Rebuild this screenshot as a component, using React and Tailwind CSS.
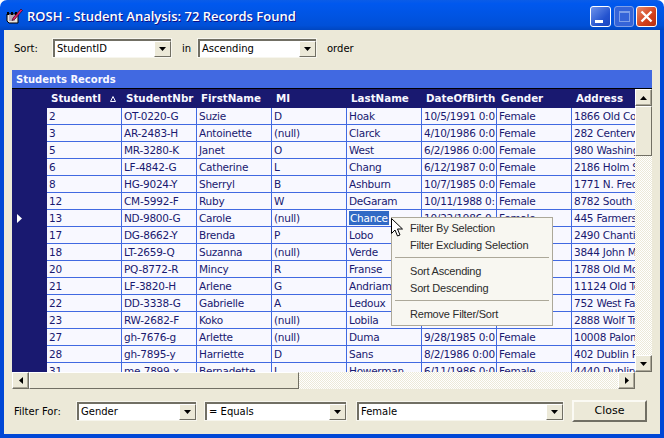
import React from 'react'

const rows = [
  ['2', 'OT-0220-G', 'Suzie', 'D', 'Hoak', '10/5/1991 0:0', 'Female', '1866 Old Country Rd'],
  ['3', 'AR-2483-H', 'Antoinette', '(null)', 'Clarck', '4/10/1986 0:0', 'Female', '282 Centerway Blvd'],
  ['5', 'MR-3280-K', 'Janet', 'O', 'West', '6/2/1986 0:00', 'Female', '980 Washington St'],
  ['6', 'LF-4842-G', 'Catherine', 'L', 'Chang', '6/12/1987 0:0', 'Female', '2186 Holm Street'],
  ['8', 'HG-9024-Y', 'Sherryl', 'B', 'Ashburn', '10/7/1985 0:0', 'Female', '1771 N. Frederick'],
  ['12', 'CM-5992-F', 'Ruby', 'W', 'DeGaram', '10/11/1988 0:', 'Female', '8782 South Valley'],
  ['13', 'ND-9800-G', 'Carole', '(null)', 'Chance', '10/22/1986 0:', 'Female', '445 Farmers Lane'],
  ['17', 'DG-8662-Y', 'Brenda', 'P', 'Lobo', '3/14/1986 0:0', 'Female', '2490 Chantilly Dr'],
  ['18', 'LT-2659-Q', 'Suzanna', '(null)', 'Verde', '7/19/1987 0:0', 'Female', '3844 John Muir Rd'],
  ['20', 'PQ-8772-R', 'Mincy', 'R', 'Franse', '1/25/1986 0:0', 'Female', '1788 Old Mountain'],
  ['21', 'LF-3820-H', 'Arlene', 'G', 'Andriaman', '5/30/1985 0:0', 'Female', '11124 Old Town Rd'],
  ['22', 'DD-3338-G', 'Gabrielle', 'A', 'Ledoux', '2/8/1987 0:00', 'Female', '752 West Falls Ave'],
  ['23', 'RW-2682-F', 'Koko', '(null)', 'Lobila', '(null)', 'Female', '2888 Wolf Trail'],
  ['27', 'gh-7676-g', 'Arlette', '(null)', 'Duma', '9/28/1985 0:0', 'Female', '10008 Palomino Ct'],
  ['28', 'gh-7895-y', 'Harriette', 'D', 'Sans', '8/2/1986 0:00', 'Female', '402 Dublin Pike'],
  ['31', 'me-7899-x', 'Bernadette', 'L', 'Howerman', '6/11/1986 0:0', 'Female', '4440 Dublin Rd'],
]

const columns = ['StudentI', 'StudentNbr', 'FirstName', 'MI', 'LastName', 'DateOfBirth', 'Gender', 'Address']

function Arrow({ dir }) {
  const points = {
    up: '3.5,0 7,4 0,4',
    down: '0,0 7,0 3.5,4',
    left: '4,0 4,7 0,3.5',
    right: '0,0 4,3.5 0,7',
  }
  const vertical = dir === 'up' || dir === 'down'
  return (
    <svg width={vertical ? 7 : 4} height={vertical ? 4 : 7} className="block">
      <polygon points={points[dir]} fill="#000" />
    </svg>
  )
}

function ScrollButton({ dir }) {
  return (
    <div className="flex h-[17px] w-[17px] shrink-0 items-center justify-center border border-t-white border-l-white border-r-[#716f64] border-b-[#716f64] bg-[#ece9d8] shadow-[inset_-1px_-1px_0_#aca899]">
      <Arrow dir={dir} />
    </div>
  )
}

function Combo({ className, value }) {
  return (
    <div className={'h-[20px] border border-[#f7f6ee] ' + className}>
      <div className="flex h-full items-stretch border-t-2 border-l-2 border-[#716f64] bg-white">
        <span className="flex-1 truncate pl-[2px] leading-[16px]">{value}</span>
        <div className="flex w-[17px] shrink-0 items-center justify-center border border-t-white border-l-white border-r-[#716f64] border-b-[#716f64] bg-[#ece9d8]">
          <Arrow dir="down" />
        </div>
      </div>
    </div>
  )
}

function TitleIcon() {
  return (
    <svg width="17" height="17" viewBox="0 0 17 17" className="shrink-0">
      <path d="M1 6h11v9H3l-2-2z" fill="#e8e4e0" stroke="#000" />
      <path d="M3 8h7M3 10h7M3 12h6" stroke="#8a6a8a" />
      <path d="M1 4h2v3H1zM5 4h2v3H5zM9 4h2v3H9z" fill="#000" />
      <path d="M7 10l8-9 1.5 1.5-8 9-2.5 1z" fill="#e0206a" stroke="#200010" strokeWidth="0.6" />
    </svg>
  )
}

function WindowButtons() {
  return (
    <div className="flex items-start pt-[6px] pr-[7px]">
      <div className="relative h-[21px] w-[21px] rounded-[3px] border border-white bg-[linear-gradient(135deg,#6f93ea,#2353cf_65%,#1c46c0)]">
        <div className="absolute bottom-[3px] left-[4px] h-[3px] w-[8px] bg-white"></div>
      </div>
      <div className="ml-[3px] flex h-[21px] w-[20px] items-start justify-center rounded-[3px] border border-[#7e9fe8] bg-[#3564d8] pt-[4px]">
        <div className="h-[11px] w-[11px] border border-t-[2px] border-[#7e9fe8]"></div>
      </div>
      <div className="ml-[2px] flex h-[21px] w-[21px] items-center justify-center rounded-[3px] border border-white bg-[linear-gradient(135deg,#e88a6a,#d2401c_60%,#b83010)]">
        <svg width="13" height="13" viewBox="0 0 13 13">
          <path d="M1.5 1.5l10 10M11.5 1.5l-10 10" stroke="#fff" strokeWidth="2.4" />
        </svg>
      </div>
    </div>
  )
}

function Grid() {
  return (
    <div className="h-[283px] w-[623px] overflow-hidden">
      <div className="flex h-[19px] w-[647px] bg-[#191970] pl-[35px] font-bold text-[#f8f8ff]">
        {columns.map((c, i) => (
          <div key={c} className="relative w-[75px] shrink-0 pl-[4px] text-[10.3px] leading-[18px]">
            {c}
            {i === 0 && (
              <svg width="6" height="6" className="absolute top-[7px] left-[63px]">
                <path d="M3 .5L5.5 5.5H.5z" fill="none" stroke="#f8f8ff" />
              </svg>
            )}
          </div>
        ))}
      </div>
      {rows.map((row, r) => (
        <div key={row[0]} className="flex h-[17px] w-[647px]">
          <div className="flex w-[35px] shrink-0 items-center bg-[#191970] pl-[5px]">
            {r === 6 && (
              <svg width="5" height="9">
                <path d="M0 0l5 4.5L0 9z" fill="#fff" />
              </svg>
            )}
          </div>
          {row.map((cell, i) => (
            <div key={i} className="w-[75px] shrink-0 overflow-hidden border-r border-b border-[#4169e1] bg-[#f8f8ff] pl-[2px] text-[10.5px] leading-[17px] tracking-[-0.25px] whitespace-nowrap text-[#191970]">
              {r === 6 && i === 4 ? <span className="bg-[#316ac5] px-[1px] py-[1px] text-white">{cell}</span> : cell}
            </div>
          ))}
        </div>
      ))}
    </div>
  )
}

function ContextMenu() {
  const item = 'h-[17px] pl-[18px] leading-[17px]'
  return (
    <div className="absolute top-[217px] left-[391px] h-[109px] w-[162px] border border-[#aca899] bg-[#f8f7f1] pt-[2px] font-['Liberation_Sans',sans-serif] text-[11px] tracking-[-0.2px] text-[#2b2b2b]">
      <div className={item}>Filter By Selection</div>
      <div className={item}>Filter Excluding Selection</div>
      <div className="mx-[3px] mt-[3px] mb-[5px] h-[1px] bg-[#aca899]"></div>
      <div className={item}>Sort Ascending</div>
      <div className={item}>Sort Descending</div>
      <div className="mx-[3px] mt-[3px] mb-[5px] h-[1px] bg-[#aca899]"></div>
      <div className={item}>Remove Filter/Sort</div>
    </div>
  )
}

export default function App() {
  return (
    <div className="relative flex h-[438px] w-[664px] flex-col overflow-hidden bg-white font-['DejaVu_Sans',sans-serif] text-[10px] text-black">
      {/* title bar */}
      <div className="flex h-[30px] shrink-0 justify-between rounded-t-[7px] bg-[linear-gradient(#0a5ce8,#0058ee_12%,#0054e3_50%,#0050d8_85%,#0046c0)]">
        <div className="flex items-center pt-[3px] pl-[6px]">
          <TitleIcon />
          <span className="ml-[4px] font-['Open_Sans',sans-serif] text-[13px] font-semibold text-white [text-shadow:1px_1px_#0f1089]">ROSH - Student Analysis: 72 Records Found</span>
        </div>
        <WindowButtons />
      </div>

      <div className="flex flex-1 flex-col border-x-4 border-b-4 border-[#0047d6] bg-[#ece9d8] px-[8px]">
        {/* sort row */}
        <div className="mt-[8px] flex h-[20px] items-center">
          <span className="w-[40px] pl-[2px]">Sort:</span>
          <Combo className="w-[120px]" value="StudentID" />
          <span className="ml-[10px] w-[15px]">in</span>
          <Combo className="w-[120px]" value="Ascending" />
          <span className="ml-[10px]">order</span>
        </div>

        {/* records panel */}
        <div className="mt-[12px] h-[318px] w-[640px]">
          <div className="h-[18px] bg-[#4169e1] pl-[4px] text-[10px] leading-[20px] font-bold text-[#f8f8ff]">Students Records</div>
          <div className="flex border-t border-black">
            <Grid />
            <div className="flex w-[17px] flex-col bg-[repeating-conic-gradient(#ffffff_0_25%,#ece9d8_0_50%)] bg-[length:2px_2px]">
              <ScrollButton dir="up" />
              <div className="h-[50px] border border-t-white border-l-white border-r-[#716f64] border-b-[#716f64] bg-[#ece9d8]"></div>
              <div className="flex-1"></div>
              <ScrollButton dir="down" />
            </div>
          </div>
          <div className="flex h-[17px] w-[623px] bg-[repeating-conic-gradient(#ffffff_0_25%,#ece9d8_0_50%)] bg-[length:2px_2px]">
            <ScrollButton dir="left" />
            <div className="w-[270px] border border-t-white border-l-white border-r-[#716f64] border-b-[#716f64] bg-[#ece9d8]"></div>
            <div className="flex-1"></div>
            <ScrollButton dir="right" />
          </div>
        </div>

        {/* filter row */}
        <div className="mt-[12px] flex h-[22px] items-center">
          <span className="w-[64px] pl-[2px]">Filter For:</span>
          <Combo className="w-[121px]" value="Gender" />
          <Combo className="ml-[7px] w-[143px]" value="= Equals" />
          <Combo className="ml-[9px] w-[208px]" value="Female" />
          <button className="ml-[8px] h-[22px] w-[75px] border-2 border-t-[#fbfaf4] border-l-[#fbfaf4] border-r-[#716f64] border-b-[#716f64] bg-[#ece9d8] text-[11px]">Close</button>
        </div>
      </div>

      <ContextMenu />
      {/* mouse pointer */}
      <svg width="13" height="20" viewBox="0 0 13 20" className="absolute top-[218px] left-[391px]">
        <path d="M.5.5v15l3.5-3.5 2.5 6 2.5-1-2.5-6h5z" fill="#fff" stroke="#000" />
      </svg>
    </div>
  )
}
